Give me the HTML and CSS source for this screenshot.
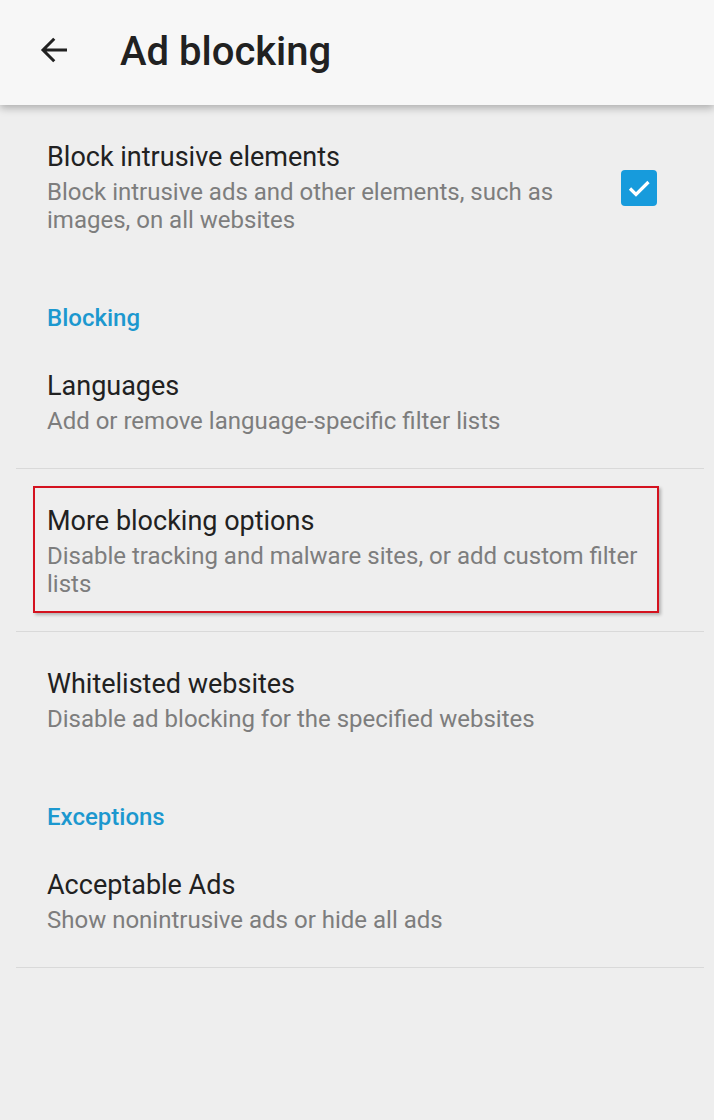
FILE: index.html
```html
<!DOCTYPE html>
<html lang="en">
<head>
  <meta charset="UTF-8" />
  <title>Ad blocking</title>
  <link rel="stylesheet" href="styles.css">
</head>
<body>
  <header class="toolbar">
    <svg class="back" width="36" height="36" viewBox="0 0 24 24">
      <path d="M20 12H4.5M11.5 4.5L4 12l7.5 7.5" fill="none" stroke="#212121" stroke-width="2" />
    </svg>
    <h1>Ad blocking</h1>
  </header>

  <main class="prefs">
    <div class="pref pref-check">
      <div class="pref-text">
        <div class="pref-title">Block intrusive elements</div>
        <div class="pref-summary">Block intrusive ads and other elements, such as images, on all websites</div>
      </div>
      <span class="checkbox">
        <svg width="36" height="36" viewBox="0 0 36 36">
          <path d="M9 18.5l6 6L27.5 12" fill="none" stroke="#fff" stroke-width="3.2" />
        </svg>
      </span>
    </div>

    <div class="category">Blocking</div>

    <div class="pref divided">
      <div class="pref-title">Languages</div>
      <div class="pref-summary">Add or remove language-specific filter lists</div>
    </div>

    <div class="pref divided highlighted">
      <div class="pref-title">More blocking options</div>
      <div class="pref-summary">Disable tracking and malware sites, or add custom filter lists</div>
    </div>

    <div class="pref">
      <div class="pref-title">Whitelisted websites</div>
      <div class="pref-summary">Disable ad blocking for the specified websites</div>
    </div>

    <div class="category">Exceptions</div>

    <div class="pref divided">
      <div class="pref-title">Acceptable Ads</div>
      <div class="pref-summary">Show nonintrusive ads or hide all ads</div>
    </div>
  </main>
</body>
</html>
```

FILE: styles.css
```css
body {
  margin: 0;
  background: #eeeeee;
  font-family: Roboto, 'Noto Sans', sans-serif;
}

.toolbar {
  height: 105px;
  background: #f7f7f7;
  display: flex;
  align-items: center;
  box-shadow: 0 3px 8px rgba(0, 0, 0, 0.28);
  position: relative;
}

.back {
  margin-left: 37px;
  margin-top: -5px;
}

.toolbar h1 {
  margin: -2px 0 0 47px;
  font-size: 40px;
  font-weight: 500;
  color: #212121;
}

.pref {
  padding: 36px 47px 33px;
  position: relative;
}

.pref.divided {
  border-bottom: 1px solid #d9d9d9;
  margin: 0 10px 0 16px;
  padding-left: 31px;
  padding-right: 37px;
}

.pref-check {
  display: flex;
  align-items: center;
  padding-right: 57px;
}

.pref-text {
  flex: 1;
  padding-right: 50px;
}

.pref-title {
  font-size: 27px;
  line-height: 32px;
  color: #212121;
}

.pref-summary {
  margin-top: 5px;
  font-size: 24px;
  line-height: 28px;
  color: #7d7d7d;
}

.checkbox {
  width: 36px;
  height: 36px;
  border-radius: 4px;
  background: #179bdc;
  display: flex;
}

.category {
  padding: 36px 47px 1px;
  font-size: 24px;
  line-height: 30px;
  font-weight: 500;
  color: #1c98cf;
}

.highlighted::after {
  content: "";
  position: absolute;
  left: 17px;
  top: 17px;
  width: 622px;
  height: 123px;
  border: 2px solid #d4121f;
  box-shadow: 2px 2px 3px rgba(0, 0, 0, 0.25);
}
```
